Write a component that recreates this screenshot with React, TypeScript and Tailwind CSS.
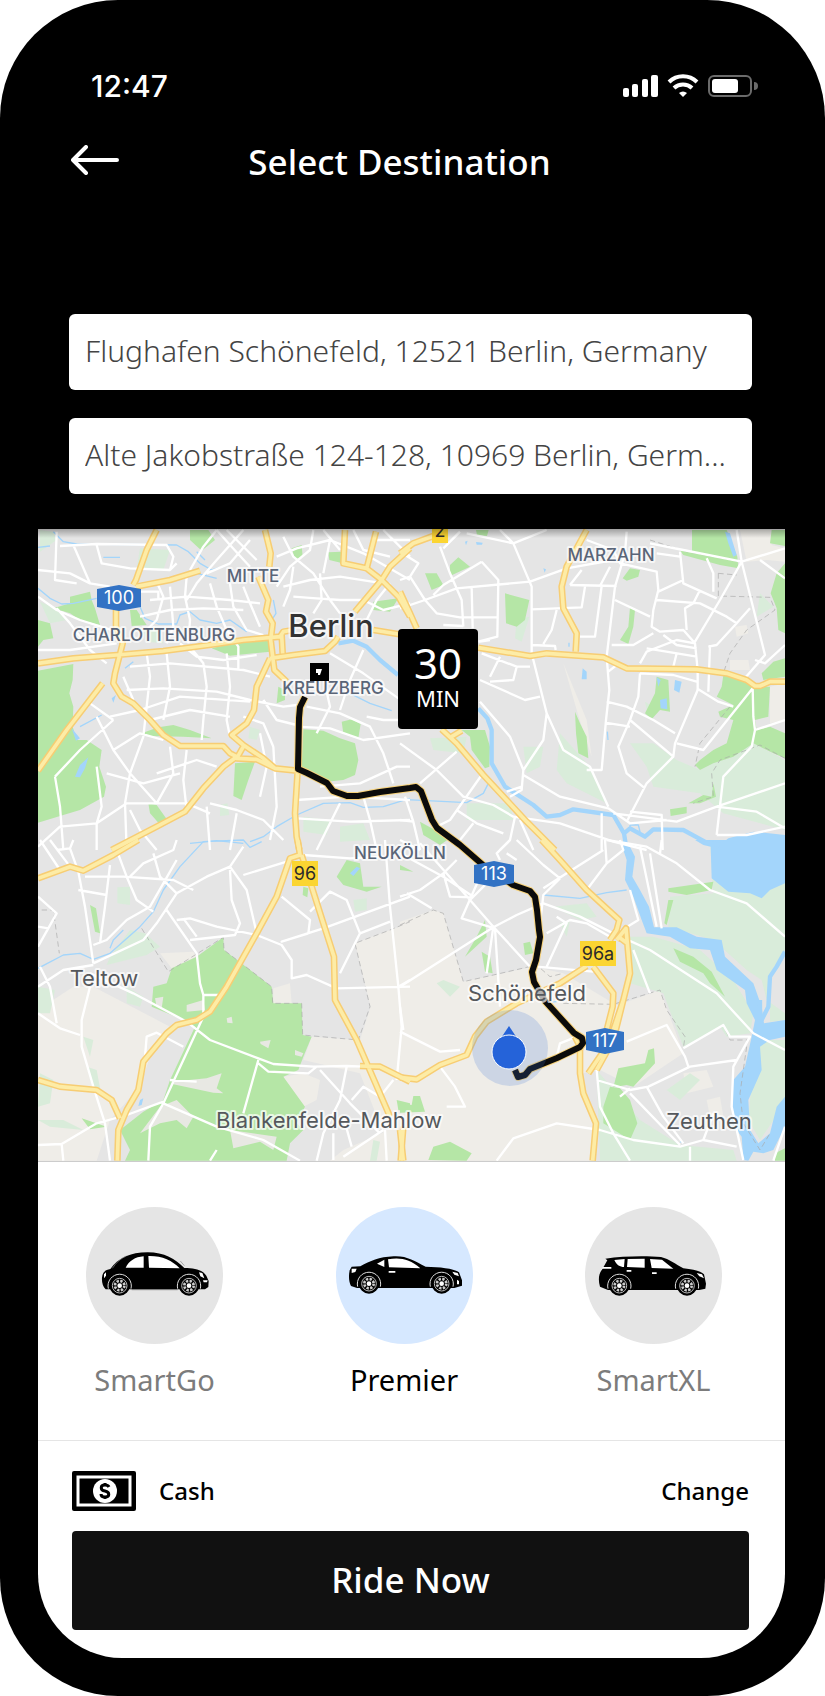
import { useState, type ReactNode } from 'react';

type Tile = {
  id: string;
  x: number;
  y: number;
  beige: string;
  pale: string;
  green: string;
  clearing?: string;
  water: string;
  stream: string;
  river?: string;
  minor: string;
  border?: string;
  major: string;
};

// Each tile is drawn at 3x in its own coordinates, x / y is its place on the map.
const TILES: Tile[] = [
  {
    id: 'nw',
    x: 30,
    y: 520,
    beige: '',
    pale: 'M30 30 70 35 80 60 30 95Z M330 85 420 90 400 150 320 145Z M340 330 380 320 400 370 350 365Z M570 855 592 850 598 885 570 888Z M820 890 900 900 890 945 820 935Z M930 920 1000 910 1020 960 930 965Z M660 620 690 630 680 660 655 655Z M30 245 90 270 110 300 60 310Z',
    green:
      'M24 452 130 432 128 480 118 520 130 560 128 620 140 660 170 660 215 690 208 740 228 800 222 830 150 870 100 885 24 908Z M480 30 535 30 555 60 515 92 480 60Z M785 85 815 75 818 110 795 118Z M895 97 935 95 938 130 898 120Z M120 230 180 215 185 240 195 265 210 315 150 300 120 280 70 265 120 250Z M24 300 60 310 70 355 40 360 24 380Z M300 270 320 270 350 315 305 318Z M545 385 600 372 720 350 722 395 600 407Z M1030 245 1105 235 1080 275 1030 270Z M820 628 880 632 930 655 975 670 985 720 975 765 940 780 890 785 850 755 815 740Z M935 605 965 598 992 612 985 655 940 640Z M615 730 675 725 655 780 635 840 610 828Z M355 850 380 855 412 900 385 908 360 880Z M335 640 385 622 430 615 480 630 545 655 460 650 360 648Z M745 500 765 510 765 540 740 550Z',
    water: 'M135 770 150 735 175 712 165 745 150 772Z M125 625 150 655 138 662Z M245 535 258 525 250 548Z',
    stream:
      'M70 35 100 65 140 72 440 75 475 95 510 130 545 150 580 140 M500 95 525 120 M500 160 560 175 M24 205 60 235 95 252 130 250 200 235 M24 82 60 78 M220 112 270 112 M330 260 345 295 385 312 440 312 450 285 480 275 510 300 560 310 600 300 650 335 M730 240 738 280 725 300 M960 520 1020 550 1085 572 M660 965 700 950 740 920 800 885 880 850 960 848 1000 862 1060 860 1140 835 M480 970 560 962 640 970 M150 620 215 585 M285 445 310 425',
    river: 'M925 370 970 362 1010 380 1050 420 1104 465',
    minor:
      'M80 35 75 180 140 190 M24 150 120 160 180 190 240 200 M130 75 180 190 M200 75 215 130 300 145 420 150 440 130 M90 78 200 72 410 75 430 110 420 150 M24 230 80 270 150 300 260 335 M80 265 120 310 180 390 230 430 M560 30 600 75 660 140 M560 30 520 80 480 150 M640 30 560 120 500 190 470 240 M590 30 680 120 M660 60 600 130 530 160 M380 185 400 230 380 300 350 330 M470 170 465 230 480 300 475 370 M330 290 420 270 520 265 640 270 M360 240 470 230 600 240 690 250 M540 190 560 260 590 330 625 380 625 450 M330 215 385 215 385 235 M420 200 430 320 410 370 M600 190 610 260 650 330 700 345 M640 200 660 250 690 320 M760 50 790 110 850 160 900 240 930 280 M740 110 800 85 900 60 1000 100 1140 180 M760 200 840 180 930 170 1060 190 M790 230 860 235 930 240 1000 240 M850 30 840 90 780 140 740 200 M880 30 930 90 M1060 30 1140 110 M970 30 1000 90 1080 110 M1040 60 1140 60 M790 140 780 210 760 260 M870 160 875 240 850 280 M900 60 880 160 M1000 240 1060 270 1140 250 M1080 190 1040 240 1010 300 M24 390 120 390 260 370 M300 440 420 430 640 450 720 470 M350 400 360 470 350 560 340 650 300 760 285 850 290 990 M410 400 420 500 400 600 M480 380 520 430 530 500 520 600 515 660 M450 370 500 410 580 420 680 405 M290 510 400 505 560 515 660 540 760 560 800 555 M240 590 330 570 450 530 660 545 M360 600 480 570 600 590 M590 400 600 500 590 600 600 650 M280 470 310 540 M200 590 250 690 300 760 380 850 M180 550 250 600 M250 690 330 640 400 660 M75 770 150 690 250 600 M75 770 90 860 100 990 M24 980 90 920 200 910 290 850 470 850 540 880 M200 740 215 860 200 910 200 990 M230 760 340 790 450 760 M300 870 330 930 380 990 M470 690 460 780 470 870 M380 760 500 720 560 740 M420 680 430 760 380 850 M540 850 620 870 700 900 760 960 M530 860 540 990 M620 880 600 990 M690 640 710 740 690 830 M730 680 740 860 720 960 M700 540 740 600 800 615 M640 590 700 610 730 680 M800 620 900 625 1000 660 1140 640 M830 560 930 580 1020 620 1060 700 1090 790 M880 470 900 560 860 640 M1000 390 960 480 930 570 M800 840 950 830 1140 840 M800 895 960 905 1140 900 M1000 830 1020 900 1040 990 M930 850 860 990 M900 400 1000 460 1140 560 M1140 600 1060 600 1010 590 M870 800 990 790 1100 740 1140 740',
    major:
      'M380 30 350 90 318 180 310 195 M318 200 420 180 510 152 M258 270 258 320 278 370 255 460 250 490 275 530 310 550 360 600 400 645 450 678 580 678 600 700 620 710 M24 430 130 415 260 405 400 393 560 372 640 360 750 350 760 335 790 330 M1030 330 1140 348 M705 30 722 100 718 140 M685 170 715 240 708 275 728 310 722 360 733 450 770 485 M720 415 680 500 672 570 650 610 605 645 640 675 700 715 735 745 800 752 M755 345 758 400 M720 415 790 405 885 393 915 365 925 350 M945 30 940 130 1010 145 1055 180 1105 230 1140 290 M1038 35 1010 145 M1140 85 1080 140 1055 180 975 275 M218 490 110 630 24 752 M640 680 620 715 680 718 735 745 M620 710 580 740 520 805 465 875 380 920 245 990 M803 752 795 880 800 950 808 990',
  },
  {
    id: 'ne',
    x: 400,
    y: 520,
    beige:
      'M1020 30 1115 30 1115 75 1155 85 1155 125 1100 120 1040 125Z M490 430 560 600 575 710 555 650 530 570Z M1110 500 1155 490 1155 600 1110 610Z M990 420 1045 420 1050 450 990 450Z M1005 320 1040 315 1045 340 1010 350Z',
    pale: 'M690 670 760 670 830 720 900 750 960 720 1060 670 1155 720 1155 930 970 880 900 820 760 800 740 740Z M480 640 560 730 620 850 500 790 470 750Z M370 680 430 680 420 740 380 760Z M90 655 200 650 190 700 100 690Z M200 850 330 850 340 900 200 900Z M1080 220 1120 260 1070 290Z M350 300 388 290 365 365 345 355Z M735 545 760 560 745 590Z',
    green:
      'M75 160 110 160 130 195 95 210Z M150 135 175 112 210 140 150 168Z M228 30 266 30 261 48 231 45Z M315 220 388 240 375 300 350 320 318 310Z M185 630 255 630 270 680 268 740 255 745 215 690 210 650Z M876 30 980 30 1012 110 1015 145 960 135 850 105 840 92 876 95Z M1115 30 1155 30 1155 78 1110 70Z M1155 130 1130 160 1112 220 1130 265 1135 330 1155 340Z M690 262 705 270 700 320 685 372 660 360 685 320Z M668 175 690 145 720 150 715 170 680 182Z M770 470 805 480 810 575 780 570 755 598 735 580 765 520Z M970 465 1020 480 1060 500 1110 500 1105 590 1065 600 1070 630 1110 620 1155 640 1155 715 1120 700 1060 670 1000 710 940 730 900 750 885 735 900 720 940 690 980 670 1000 600 960 590 955 575 1000 555 950 530 965 500Z M1085 460 1120 425 1155 415 1155 470 1090 480Z M525 575 540 610 560 650 565 715 535 700 528 640Z M810 868 860 860 860 880 812 888Z M865 850 910 825 935 830 940 790 948 830 900 850Z M60 905 150 955 120 975 70 945Z',
    water:
      'M548 445 560 455 560 478 545 478Z M825 480 845 485 838 518 822 510Z M780 540 800 535 802 568 782 565Z M770 472 782 480 775 500Z M975 35 990 40 1010 105 1000 110 985 70Z M940 990 985 955 1060 935 1155 945 1155 990Z M195 65 203 62 198 76Z M228 66 248 68 246 74 230 74Z M430 145 438 148 434 158Z',
    stream: 'M0 838 80 842 200 848 250 820 265 790 M622 635 624 660 M507 368 507 380 M690 915 715 915 720 935 690 930 690 915',
    river:
      'M235 565 262 595 275 630 275 730 315 800 400 855 440 890 480 885 520 868 640 885 672 940 680 990 M672 940 690 925 735 950 760 928 850 930 920 968 960 975',
    minor:
      'M0 265 75 240 170 205 390 185 500 145 640 120 M120 80 150 160 185 240 190 320 M180 35 130 85 M0 95 55 130 30 170 75 240 M0 180 30 170 M100 225 130 195 245 125 M200 40 340 70 395 200 395 400 440 580 490 690 570 740 625 860 M300 30 340 70 440 30 M245 125 295 180 292 350 235 365 M215 205 218 325 M75 240 110 280 180 292 295 292 M130 315 190 318 M510 195 650 198 M555 200 545 262 395 268 M605 198 585 350 540 350 M470 270 455 330 430 372 M395 375 465 378 467 390 M545 150 510 195 M630 140 600 198 M680 35 675 100 645 200 620 410 628 510 618 600 605 750 560 750 M560 60 640 90 660 130 770 155 775 210 760 270 755 320 780 335 850 330 885 370 893 450 893 510 825 670 820 710 740 790 680 905 M635 375 700 375 760 340 M645 240 750 290 M770 240 900 250 980 290 1010 310 M775 215 850 180 M840 95 850 190 950 235 M920 115 940 160 940 215 M900 210 880 250 855 265 860 330 M750 70 850 90 1025 125 960 240 885 365 M770 100 840 110 M1010 30 1025 125 1095 405 1030 480 M1025 125 1155 85 M1080 120 1155 175 M1050 265 1010 310 950 375 925 380 M1155 375 1095 430 1065 420 M720 460 715 530 690 600 655 680 680 760 735 805 M620 545 680 560 760 600 825 640 M615 608 690 620 M690 600 820 710 M740 385 890 410 M720 430 740 395 830 360 885 370 M790 345 830 375 890 385 M625 455 650 435 M720 460 820 465 890 485 M830 400 820 440 M930 375 925 515 M890 505 955 545 1000 560 M1058 505 910 690 830 670 M1058 505 1060 590 1065 630 1155 600 M1065 630 1055 680 970 770 950 945 M950 860 1155 790 M950 860 830 905 640 880 M950 860 1070 875 1155 925 M690 875 785 885 788 990 M950 945 1040 945 1155 920 M240 545 330 650 370 750 365 810 330 830 M440 580 430 660 370 750 M370 765 480 830 625 865 690 910 800 900 M240 480 375 540 420 530 M245 400 350 440 390 440 M350 440 340 480 270 485 M300 410 270 470 M240 365 270 360 M0 670 110 750 190 830 280 855 340 890 480 910 640 965 740 990 M170 695 60 790 M245 765 150 900 100 925 M0 900 40 905 M15 830 40 905 60 990 M345 890 330 960 300 990 M360 900 400 990 M605 880 605 990 M220 910 180 960 M170 870 230 910 310 940 M365 800 320 815',
    border:
      'M750 60 860 95 1020 125 M955 160 1010 165 M955 160 955 228 1110 232 1125 270 1040 330 990 400 970 460 M990 560 900 670 885 740 M1155 715 1080 675 960 720 935 760 940 830 880 850',
    major:
      'M0 100 40 70 100 48 M560 30 500 140 485 200 490 265 530 340 527 395 M235 383 390 408 440 400 610 412 680 445 890 448 980 460 1040 480 1065 498 1080 498 1110 485 1155 485 M0 215 30 280 50 325 M125 628 170 670 250 765 380 905 465 990 M155 650 185 632',
  },
  {
    id: 'sw',
    x: 30,
    y: 840,
    beige:
      'M24 510 130 440 190 440 420 560 370 620 330 740 240 840 200 962 24 962Z M845 590 990 600 1022 500 975 310 1080 270 1140 250 1140 962 1060 962 1060 880 990 700 820 660Z M730 445 780 430 785 490 730 490Z M390 340 490 335 500 350 425 385Z M760 710 820 700 870 720 860 780 820 800Z M940 930 1100 860 1140 880 1140 962 900 962Z',
    pale: 'M300 270 345 280 390 320 350 345 230 375 240 350Z M262 142 300 140 300 195 262 190Z M30 700 70 720 60 790 24 800Z M160 590 190 600 180 650Z M24 440 75 450 60 520 24 520Z M290 440 340 470 330 500 290 490Z M170 680 200 690 215 770 190 750Z M24 840 100 840 160 870 60 860Z M1030 900 1050 905 1040 962 1020 962Z M970 180 1010 175 1010 210 975 215Z',
    green:
      'M425 385 500 350 580 292 582 330 725 440 730 490 815 490 818 585 845 590 820 650 805 690 760 710 825 800 800 850 820 870 780 910 770 962 285 962 300 930 270 870 340 815 400 780 420 720 495 560 460 540 425 525 365 500 370 440 410 430Z M180 195 198 205 210 280 195 275Z M155 835 230 860 180 868Z M920 110 950 60 990 70 1000 140 1055 140 1010 155 940 135Z M820 140 835 145 832 172 818 165Z M1100 780 1140 790 1140 815 1105 810Z',
    clearing:
      'M470 495 520 480 525 510 470 515Z M590 535 605 530 608 550 592 548Z M690 605 722 600 715 625 692 612Z M425 725 530 715 575 700 560 745 580 760 550 758 430 733Z M330 880 390 800 440 780 490 830 470 865 440 840 390 850Z M600 870 740 890 730 930 690 905 610 925Z M375 475 400 470 395 505 380 500Z M795 630 820 640 815 650 795 645Z',
    water: 'M330 780 340 775 335 795 325 798Z M960 100 980 80 990 85 970 108Z',
    stream: 'M24 385 100 345 150 340 190 358 240 340 330 260 370 215 400 150 450 80 520 5 640 0 660 22 695 5 M240 325 250 300 280 270',
    minor:
      'M24 170 80 220 24 320 M120 25 145 95 165 200 190 370 M190 370 340 300 380 250 440 160 530 110 600 80 640 20 M24 440 100 390 190 375 M30 380 60 440 80 550 M24 520 90 565 150 585 M180 440 155 540 155 620 190 740 225 850 240 962 M24 260 55 265 M180 400 310 460 470 545 540 600 685 655 730 672 850 680 950 678 1000 680 M190 315 230 300 290 240 360 200 400 130 440 60 M240 75 225 200 210 310 M165 110 280 110 430 120 490 150 M145 150 230 165 M260 30 290 110 320 180 370 215 M60 0 120 80 M30 0 90 90 M130 0 120 25 80 30 M300 110 340 70 430 30 440 0 M370 40 390 110 440 160 M410 210 500 340 510 430 520 465 570 465 M520 465 520 530 400 790 360 860 355 962 M440 240 480 235 560 260 680 285 755 315 785 360 785 415 830 405 920 445 1140 440 M460 235 500 290 M600 90 605 180 630 250 615 285 480 300 M600 80 650 150 680 280 M640 105 770 65 M755 170 840 240 835 280 755 305 880 265 1140 170 M840 215 900 155 950 180 990 280 930 400 M1065 0 1080 200 1105 440 1115 560 1100 720 M990 280 1080 245 M820 45 960 55 1060 50 M1105 440 1140 420 M400 785 290 825 200 850 95 912 24 915 M95 912 100 962 M400 790 560 860 700 900 810 962 M685 660 640 820 M685 670 715 695 835 700 860 680 M420 720 500 725 M345 650 350 590 380 578 460 620 M950 680 930 780 880 880 860 962 M870 690 960 790 1050 880 M910 880 910 960 M940 830 965 920 M940 950 1060 870 M965 780 1000 740 1050 770 1090 720 M1050 750 1065 800 M1065 870 1070 962 M540 962 560 930',
    border:
      'M35 210 70 210 88 340 M335 265 415 395 580 292 582 330 725 440 728 490 815 490 818 585 985 600 1020 500 975 310 1080 270 1140 245',
    major:
      'M24 115 120 80 160 92 250 45 325 0 M803 0 810 45 780 55 740 170 680 280 590 440 540 515 500 540 440 555 410 580 340 665 325 750 290 810 265 870 262 962 M815 45 880 250 912 350 915 480 980 600 1080 830 M24 720 90 740 200 750 245 780 270 835 M990 678 1050 680 1100 705 1140 725 M1120 860 1112 962',
  },
  {
    id: 'se',
    x: 400,
    y: 840,
    beige:
      'M0 245 100 210 130 220 190 425 400 380 490 400 640 490 660 500 600 690 545 700 580 850 575 962 0 962Z M640 500 780 450 850 640 700 740 600 690Z M850 700 920 690 940 740 860 760Z M920 780 960 770 970 830 930 830Z',
    pale: 'M690 290 760 290 900 330 1000 420 1060 520 1050 580 980 590 960 560 850 620 790 460 690 430Z M790 0 930 0 940 160 810 170 805 260 940 300 1040 390 1085 420 1100 480 1155 520 1155 0Z M1070 600 1155 600 1155 790 1080 900 1045 840 1050 780Z M590 690 720 840 840 915 1000 930 1010 962 600 962Z M460 200 560 190 590 230 540 240Z M800 750 870 700 900 720 840 780Z M110 430 130 420 180 440 150 470Z M1110 400 1155 330 1155 540 1110 545Z M480 250 510 240 500 290Z',
    green:
      'M805 145 940 125 935 150 860 165 805 155Z M805 180 820 180 800 255 793 250Z M820 325 880 350 935 395 975 470 930 430 910 400 840 365Z M255 240 260 290 195 350 230 290Z M245 335 270 350 278 400 255 395Z M370 310 390 305 400 340 375 345Z M655 685 735 670 745 630 762 625 765 670 700 740 680 735 640 742Z M630 740 660 745 690 780 712 850 690 900 610 850 610 800Z M0 790 35 795 40 768 60 768 75 815 0 818Z M85 960 100 920 150 905 215 940 200 962Z M1125 940 1155 925 1155 962 1125 962Z M0 75 40 95 0 90Z',
    water:
      'M665 15 690 20 705 50 697 110 720 150 747 200 762 262 830 262 890 290 965 300 975 350 1060 430 1085 500 1092 550 1155 540 1155 590 1110 600 1080 620 1085 690 1045 780 1050 870 1075 910 1110 880 1130 800 1155 770 1155 860 1120 930 1090 940 1060 935 1045 962 1030 960 1025 890 995 850 1000 720 1035 680 1055 590 1065 540 1040 490 1035 450 950 390 930 330 870 325 810 290 740 280 725 240 700 170 675 120 680 60Z M885 0 930 0 1155 0 1155 130 1110 150 1085 175 1050 160 985 155 935 115 932 20 910 15Z',
    stream: 'M430 165 540 175 620 158 680 150 M440 487 470 485 M840 905 850 908',
    river: 'M1155 335 1130 380 1110 410 1105 500 1085 540 M1080 480 1080 520',
    minor:
      'M0 440 280 262 350 225 430 190 M60 10 210 180 280 260 390 380 M280 260 260 400 M285 265 300 500 M0 170 60 150 130 100 170 60 M0 40 130 110 220 170 M20 160 95 205 M130 100 150 170 220 172 M0 0 60 30 M240 110 185 235 275 262 M210 180 260 130 M350 0 430 75 480 115 M320 40 350 60 M300 60 290 40 330 0 M430 190 540 230 640 280 750 330 950 460 1060 580 1155 630 M430 145 500 100 610 30 M480 115 430 165 420 250 M560 150 620 70 615 0 M660 0 670 30 620 70 M620 0 740 20 830 70 930 150 1040 190 1155 290 M720 20 770 260 M750 40 785 265 M785 0 780 40 M690 150 715 240 650 280 M440 380 500 250 470 230 M440 280 510 240 560 250 630 290 M410 380 580 395 M700 330 750 460 M680 605 800 555 855 650 865 680 M850 625 970 555 990 590 1050 590 1000 680 995 800 1030 960 M1010 660 870 680 745 740 690 750 590 720 M590 690 600 800 640 880 690 962 M690 760 840 915 M740 740 790 830 850 910 M660 770 690 745 M290 962 340 895 470 850 600 870 700 900 840 920 910 900 1010 920 M870 920 870 962 M910 900 940 820 M1155 860 1120 962 M0 575 120 635 180 630 M120 680 165 740 195 800 140 800 M470 650 480 610 530 590 M0 500 10 570 M225 590 200 630',
    border:
      'M0 255 100 210 130 220 190 425 280 405 410 375 450 410 490 400 M490 490 640 493 780 450 800 510 855 590 850 625 970 555 990 600 1045 600 M1040 620 1020 760 1030 850 1080 930 1110 880',
    major:
      'M425 0 480 60 560 150 625 210 658 240 650 270 630 300 M650 300 678 265 682 310 690 400 670 480 640 600 590 690 M655 290 682 310 M580 380 640 460 638 500 620 570 M670 480 640 570 M560 378 480 430 350 490 260 545 225 590 200 645 120 675 50 718 0 712 M620 620 565 700 M525 590 540 620 540 700 550 760 588 850 578 962 M0 870 10 962',
  },
];

const LABELS = [
  { text: 'MITTE', x: 253, y: 582 },
  { text: 'CHARLOTTENBURG', x: 154, y: 641 },
  { text: 'KREUZBERG', x: 333, y: 694 },
  { text: 'MARZAHN', x: 611, y: 561 },
  { text: 'NEUKÖLLN', x: 400, y: 859 },
];

const TOWNS = [
  { text: 'Teltow', x: 104, y: 986 },
  { text: 'Blankenfelde-Mahlow', x: 329, y: 1128 },
  { text: 'Schönefeld', x: 527, y: 1001 },
  { text: 'Zeuthen', x: 709, y: 1129 },
];

const SHIELDS = [
  { text: '100', x: 119, y: 598, half: 22 },
  { text: '113', x: 494, y: 874, half: 20 },
  { text: '117', x: 605, y: 1041, half: 19 },
];

const PLATES = [
  { text: '2', x: 440, y: 530, half: 8 },
  { text: '96', x: 305, y: 873, half: 13 },
  { text: '96a', x: 598, y: 953, half: 18 },
];

const ROUTE =
  'M305 697 300 707 299 718 298 769 307 773 327 783 333 791 347 796 358 796 380 792 410 788 416 787 421 791 432 820 437 828 460 845 483 865 513 885 530 891 535 897 537 910 539 930 540 937 536 960 532 972 534 982 545 1001 574 1033 582 1038 583 1043 580 1047 557 1058 530 1069 525 1075 518 1077 515 1070';

function Layer({ pick, children }: { pick: (t: Tile) => string | undefined; children: (d: string) => ReactNode }) {
  return (
    <>
      {TILES.map((t) => {
        const d = pick(t);
        if (!d) return null;
        return (
          <g key={t.id} transform={`translate(${t.x} ${t.y}) scale(${1 / 3})`}>
            {children(d)}
          </g>
        );
      })}
    </>
  );
}

function RouteMap() {
  return (
    <svg
      viewBox="38 529 747 632"
      className="block h-auto w-full bg-[#e5e5e5] font-['Inter',sans-serif]"
      role="img"
      aria-label="Route map of Berlin"
      strokeLinejoin="round"
    >
      <defs>
        <linearGradient id="topShade" x1="0" y1="0" x2="0" y2="1">
          <stop offset="0" stopColor="#000" stopOpacity="0.3" />
          <stop offset="1" stopColor="#000" stopOpacity="0" />
        </linearGradient>
      </defs>
      <Layer pick={(t) => t.beige}>{(d) => <path d={d} fill="#efede8" />}</Layer>
      <Layer pick={(t) => t.pale}>{(d) => <path d={d} fill="#d9ecda" />}</Layer>
      <Layer pick={(t) => t.green}>{(d) => <path d={d} fill="#b5e6a6" />}</Layer>
      <Layer pick={(t) => t.clearing}>{(d) => <path d={d} fill="#e8e8e3" />}</Layer>
      <Layer pick={(t) => t.water}>{(d) => <path d={d} fill="#a3d5fb" />}</Layer>
      <Layer pick={(t) => t.stream}>{(d) => <path d={d} fill="none" stroke="#a3d5fb" strokeWidth="4" />}</Layer>
      <Layer pick={(t) => t.river}>{(d) => <path d={d} fill="none" stroke="#a3d5fb" strokeWidth="13" />}</Layer>
      <Layer pick={(t) => t.border}>
        {(d) => <path d={d} fill="none" stroke="#a9a9a9" strokeWidth="2" strokeDasharray="16 10" />}
      </Layer>
      <Layer pick={(t) => t.minor}>{(d) => <path d={d} fill="none" stroke="#fff" strokeWidth="7" />}</Layer>
      <Layer pick={(t) => t.major}>{(d) => <path d={d} fill="none" stroke="#f7cd73" strokeWidth="20" />}</Layer>
      <Layer pick={(t) => t.major}>{(d) => <path d={d} fill="none" stroke="#fdeca6" strokeWidth="11" />}</Layer>

      <path d={ROUTE} fill="none" stroke="#f7d27a" strokeWidth="8" />
      <path d={ROUTE} fill="none" stroke="#0b0b0b" strokeWidth="6" />

      {SHIELDS.map((s) => (
        <g key={s.text}>
          <path
            d={`M${s.x - s.half} ${s.y - 9} L${s.x} ${s.y - 13} L${s.x + s.half} ${s.y - 9} V${s.y + 9} L${s.x} ${s.y + 13} L${s.x - s.half} ${s.y + 9}Z`}
            fill="#3272c4"
          />
          <text x={s.x} y={s.y + 6} textAnchor="middle" fontSize="18" fill="#fff">
            {s.text}
          </text>
        </g>
      ))}
      {PLATES.map((p) => (
        <g key={p.text}>
          <rect x={p.x - p.half} y={p.y - 12} width={p.half * 2} height="25" fill="#fbd532" />
          <text x={p.x} y={p.y + 7} textAnchor="middle" fontSize="18" fill="#2b2b2b">
            {p.text}
          </text>
        </g>
      ))}

      <g textAnchor="middle" stroke="#fff" strokeOpacity="0.7" strokeWidth="4" paintOrder="stroke">
        {LABELS.map((l) => (
          <text key={l.text} x={l.x} y={l.y} fontSize="17" fontWeight="500" fill="#5a6578">
            {l.text}
          </text>
        ))}
        {TOWNS.map((l) => (
          <text key={l.text} x={l.x} y={l.y} fontSize="22" fill="#55585c">
            {l.text}
          </text>
        ))}
        <text x="331" y="637" fontSize="31" fontWeight="500" fill="#333">
          Berlin
        </text>
      </g>

      {/* Drop-off point */}
      <rect x="310" y="663" width="19" height="18" fill="#000" />
      <path d="M316 669h6l-2 6h-2v-2h-2z" fill="#fff" />

      {/* Current position */}
      <circle cx="510" cy="1048" r="38" fill="#3f78d8" fillOpacity="0.2" />
      <path d="M509 1026l8 12h-16z" fill="#2563d9" />
      <circle cx="509" cy="1052" r="17" fill="#2563d9" stroke="#fff" strokeWidth="1" />

      <g textAnchor="middle" fill="#fff" className="font-['Noto_Sans',sans-serif]">
        <rect x="398" y="629" width="80" height="100" rx="4" fill="#000" />
        <text x="438" y="679" fontSize="42">
          30
        </text>
        <text x="438" y="707" fontSize="22">
          MIN
        </text>
      </g>
      <rect x="38" y="529" width="747" height="9" fill="url(#topShade)" />
    </svg>
  );
}

function Wheel({ cx, cy }: { cx: number; cy: number }) {
  return (
    <g>
      <path d={`M${cx - 34} ${cy + 9}A35 35 0 1 1 ${cx + 34} ${cy + 9}`} fill="none" stroke="#ddd" strokeWidth="3" />
      <circle cx={cx} cy={cy} r="30" fill="#000" />
      <circle cx={cx} cy={cy} r="22" fill="none" stroke="#bbb" strokeWidth="3" />
      <circle cx={cx} cy={cy} r="14" fill="none" stroke="#ccc" strokeWidth="8" strokeDasharray="7 4" />
      <circle cx={cx} cy={cy} r="7" fill="#fff" />
    </g>
  );
}

function Beetle() {
  return (
    <svg viewBox="77 50 411 411" className="size-full" aria-hidden="true">
      <path d="M125 262C126 245 136 238 150 236C172 204 210 186 262 186C312 186 345 206 372 233C405 233 428 240 438 256L445 272L444 290L434 297H136C127 288 124 276 125 262Z" />
      <path d="M196 232C206 212 224 200 250 198V232Z M264 197C304 196 336 210 358 234L266 232Z" fill="#fff" />
      <path d="M156 234C168 216 182 204 198 197M360 212L372 226" stroke="#888" strokeWidth="2" fill="none" />
      <path d="M416 246l10 2 6 16-12-6z M428 270h14l-2 6h-10z M131 252l6-6v10l-6 8z" fill="#fff" />
      <path d="M214 298H352" stroke="#777" strokeWidth="3" />
      <Wheel cx={178} cy={286} />
      <Wheel cx={386} cy={286} />
    </svg>
  );
}

function Coupe() {
  return (
    <svg viewBox="77 50 411 411" className="size-full" aria-hidden="true">
      <path d="M118 240L124 229L150 228C180 212 205 200 250 198C290 196 312 212 346 229C390 230 430 234 446 246L455 270V286L432 293H140L122 287C116 276 114 258 118 240Z" />
      <path d="M233 207C270 201 298 206 330 234L236 231Z M200 220L222 208L222 230Z" fill="#fff" />
      <path d="M124 235h15l-4 10-11 3z M426 244l16 4 4 10-14-5z M235 242h20v5h-20z M440 268l6 4v10h-6z" fill="#fff" />
      <Wheel cx={176} cy={280} />
      <Wheel cx={394} cy={280} />
    </svg>
  );
}

function Wagon() {
  return (
    <svg viewBox="77 50 411 411" className="size-full" aria-hidden="true">
      <path d="M138 205C190 197 260 196 305 200C330 206 350 222 372 234C405 238 425 243 434 252L440 280L438 295L420 299H146L122 289C116 270 118 250 128 238L144 210Z" />
      <path d="M165 209L196 206L194 230C182 230 172 224 165 209Z M205 206L256 205V232L203 230Z M272 206L308 208L342 235L277 233Z" fill="#fff" />
      <path d="M130 230h26v5h-28z M202 239h14v5h-14z M278 246h14v5h-14z M412 248l16 4 6 12-14-6z" fill="#fff" />
      <Wheel cx={180} cy={286} />
      <Wheel cx={383} cy={286} />
    </svg>
  );
}

const RIDES = [
  { id: 'go', name: 'SmartGo', car: <Beetle /> },
  { id: 'premier', name: 'Premier', car: <Coupe /> },
  { id: 'xl', name: 'SmartXL', car: <Wagon /> },
];

function StatusBar() {
  return (
    <div className="flex h-8 items-center justify-between pr-[27px] pl-[53px] text-white">
      <span className="font-['Inter',sans-serif] text-[30px] font-medium">12:47</span>
      <svg viewBox="622 73 136 26" className="h-[26px] w-[136px]" fill="#fff" role="img" aria-label="Signal, Wi-Fi, battery">
        <rect x="623" y="88" width="6" height="9" rx="2" />
        <rect x="632" y="84" width="6" height="13" rx="2" />
        <rect x="642" y="79" width="6" height="18" rx="2" />
        <rect x="651" y="75" width="7" height="22" rx="2" />
        <path d="M669 82A20 20 0 0 1 697 82" fill="none" stroke="#fff" strokeWidth="4" />
        <path d="M674 88A13 13 0 0 1 692 88" fill="none" stroke="#fff" strokeWidth="4" />
        <path d="M683 97l-4-4a6 6 0 0 1 8 0z" />
        <rect x="709" y="76" width="42" height="20" rx="5" fill="none" stroke="#6b6b6b" strokeWidth="2" />
        <rect x="712" y="79" width="26" height="14" rx="3" />
        <path d="M754 82a4 4 0 0 1 0 8z" fill="#6b6b6b" />
      </svg>
    </div>
  );
}

export default function App() {
  const [ride, setRide] = useState('premier');
  const [from, setFrom] = useState('Flughafen Schönefeld, 12521 Berlin, Germany');
  const [to, setTo] = useState('Alte Jakobstraße 124-128, 10969 Berlin, Germ...');

  return (
    <div className="bg-white font-['Noto_Sans',sans-serif]">
      <div className="rounded-[118px] bg-black pt-[70px] pr-10 pb-[38px] pl-[38px]">
        <StatusBar />

        <header className="mt-9 flex h-12 items-center pr-[105px] pl-[33px] text-white">
          <button aria-label="Back" className="w-12 pb-1">
            <svg viewBox="0 0 48 30" className="h-[30px] w-12" fill="none" stroke="#fff" strokeWidth="4" strokeLinecap="round" strokeLinejoin="round">
              <path d="M15 2L2 15l13 13M2 15h44" />
            </svg>
          </button>
          <h1 className="flex-1 text-center text-[35px] font-medium">Select Destination</h1>
        </header>

        <form className="mt-32 flex flex-col gap-7 pr-[33px] pb-[35px] pl-[31px]">
          <input
            aria-label="Pick-up address"
            value={from}
            onChange={(e) => setFrom(e.target.value)}
            className="h-[76px] w-full rounded-md bg-white pb-1 pl-4 text-[30px] font-light text-[#444]"
          />
          <input
            aria-label="Drop-off address"
            value={to}
            onChange={(e) => setTo(e.target.value)}
            className="h-[76px] w-full rounded-md bg-white pb-1 pl-4 text-[30px] font-light text-[#444]"
          />
        </form>

        <main className="overflow-hidden rounded-b-[84px] bg-white">
          <RouteMap />

          <section className="flex justify-between border-t border-[#ccc] pt-[45px] pr-[63px] pb-10 pl-12">
            {RIDES.map((r) => (
              <button
                key={r.id}
                onClick={() => setRide(r.id)}
                aria-pressed={ride === r.id}
                className={`flex w-[137px] flex-col items-center gap-4 text-[29px] leading-10 ${ride === r.id ? 'text-black' : 'text-[#7c7c7c]'}`}
              >
                <span className={`size-[137px] rounded-full ${ride === r.id ? 'bg-[#d6e8ff]' : 'bg-[#e5e5e5]'}`}>
                  {r.car}
                </span>
                {r.name}
              </button>
            ))}
          </section>

          <section className="border-t border-[#e5e5e5] pt-[30px] pr-9 pb-7 pl-[34px]">
            <div className="flex h-10 items-center justify-between text-2xl font-medium">
              <span className="flex items-center gap-[23px]">
                <svg viewBox="0 0 64 40" className="h-10 w-16" aria-hidden="true">
                  <rect width="64" height="40" rx="2" />
                  <rect x="6" y="6" width="52" height="28" fill="none" stroke="#fff" strokeWidth="3" />
                  <circle cx="33" cy="20" r="12" fill="#fff" />
                  <path d="M37 16c-1-2-3-2-4-2-5 0-5 5 0 6s5 6 0 6c-2 0-4-1-4-3M33 12v3M33 25v3" fill="none" stroke="#000" strokeWidth="3" />
                </svg>
                Cash
              </span>
              <button>Change</button>
            </div>
            <button className="mt-5 h-[99px] w-full rounded bg-[#111] text-[35px] font-medium text-white">Ride Now</button>
          </section>
        </main>
      </div>
    </div>
  );
}
